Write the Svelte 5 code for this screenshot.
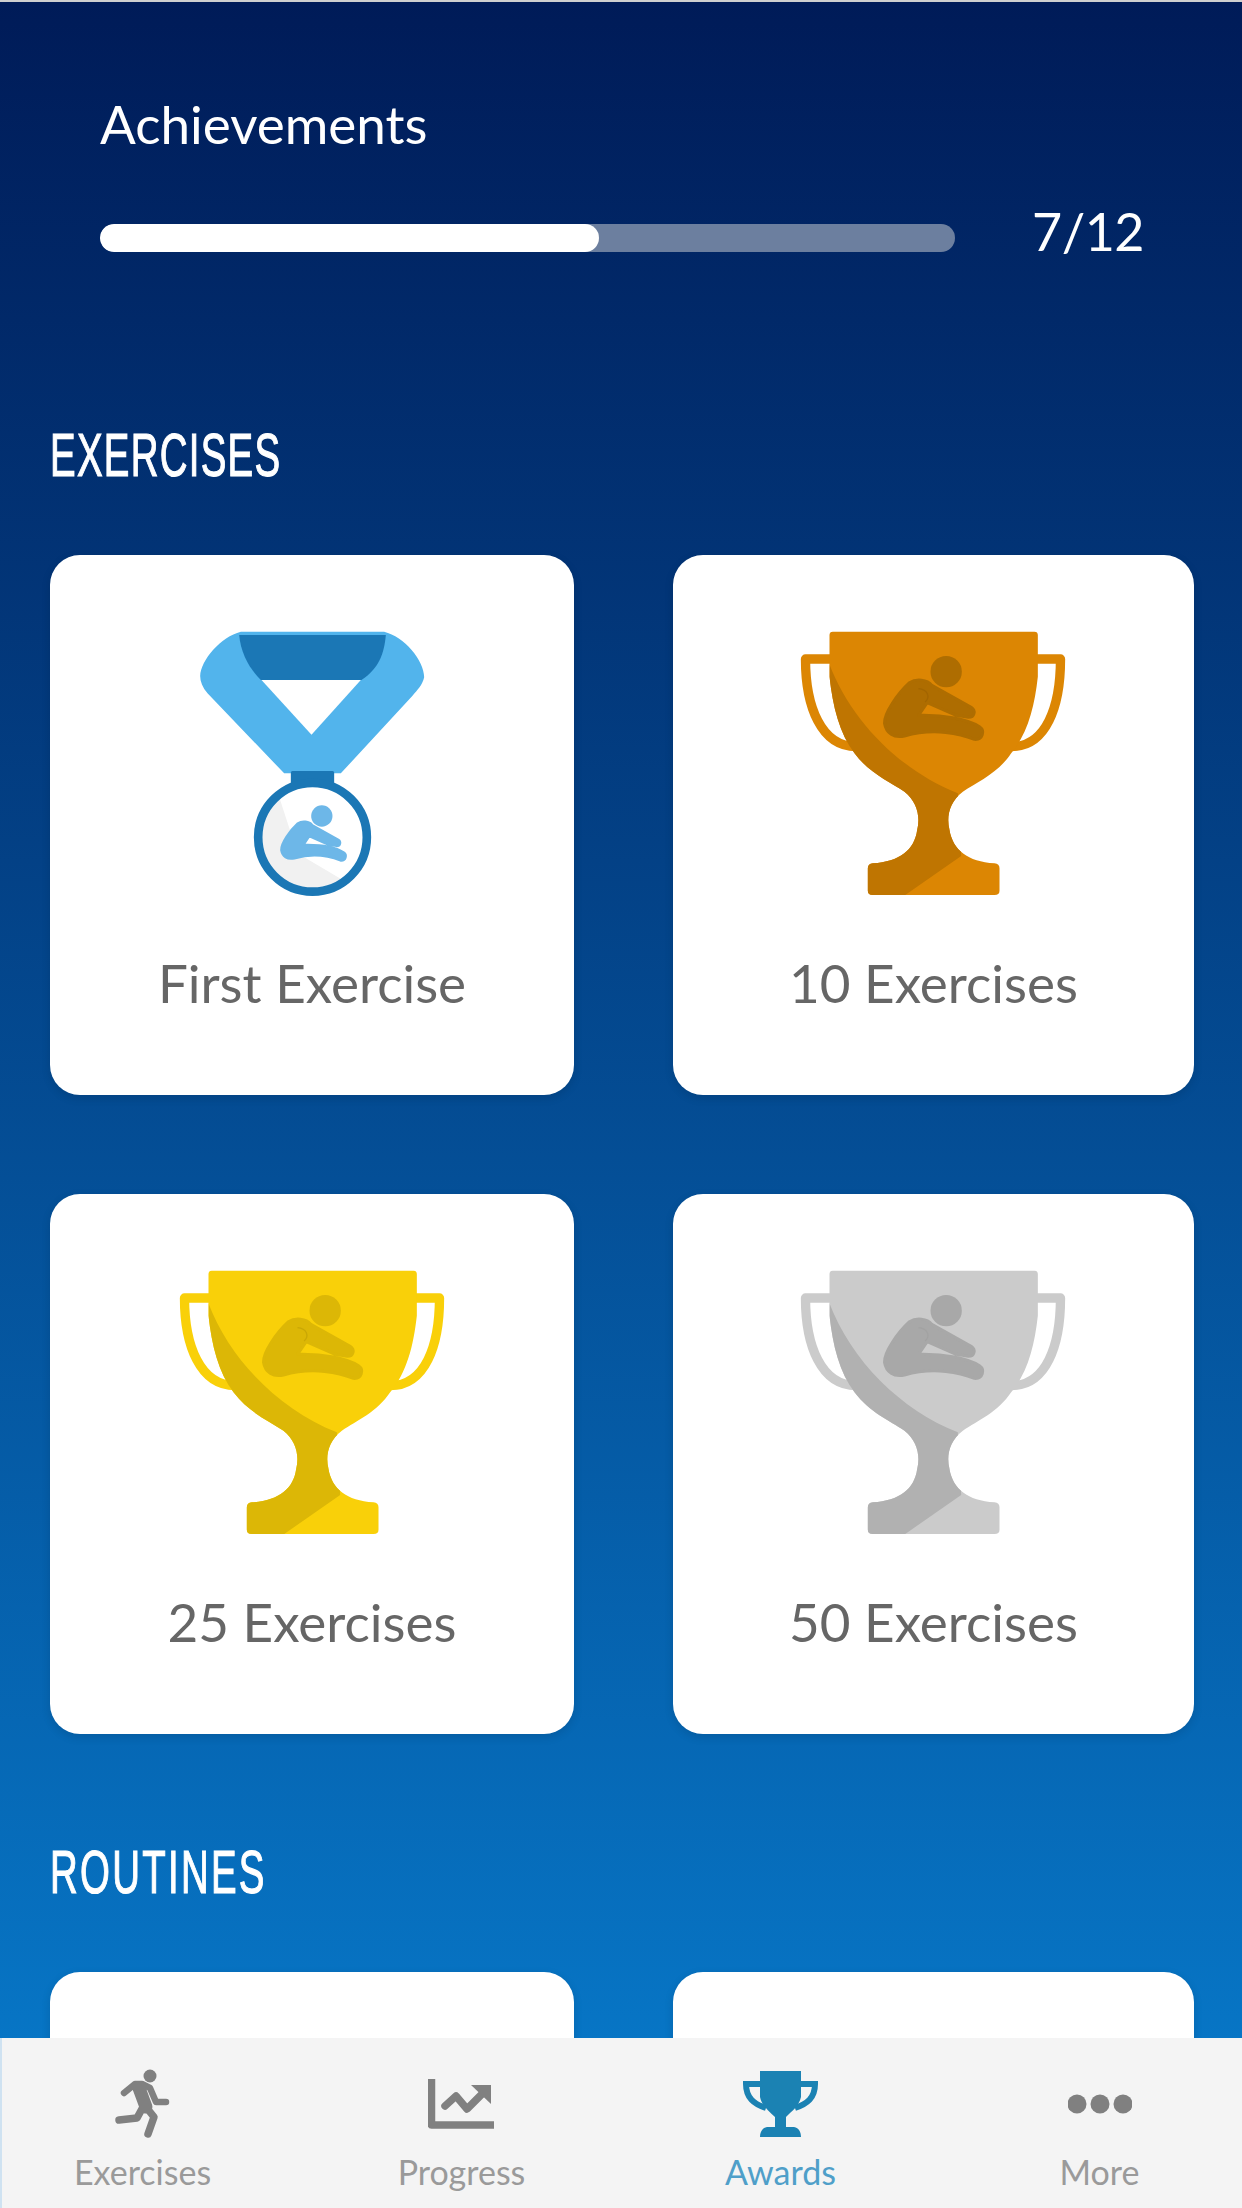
<script lang="ts">
	const exercises = [
		{ label: 'First Exercise', kind: 'medal' },
		{ label: '10 Exercises', kind: 'bronze' },
		{ label: '25 Exercises', kind: 'gold' },
		{ label: '50 Exercises', kind: 'silver' }
	];
	const tabs = ['Exercises', 'Progress', 'Awards', 'More'];
	const cup =
		'M175,75 Q175,65 185,65 L790,65 Q800,65 800,75 L800,200 C790,290 770,370 720,430 C680,490 620,515 575,545 C535,575 525,620 535,660 C545,720 590,755 670,760 Q685,762 685,775 L685,842 Q685,855 670,855 L305,855 Q290,855 290,842 L290,775 Q290,762 305,760 C385,755 430,720 438,660 C448,620 438,575 400,545 C355,515 295,490 250,430 C205,370 185,290 175,200 Z';
	const figure =
		'M340,340 C338,310 380,250 415,218 C435,205 468,208 482,226 L600,292 C615,302 610,322 592,322 L555,316 L468,278 L442,316 C520,314 590,328 625,350 C642,362 635,390 610,388 C570,372 490,352 400,378 C368,385 345,370 340,340 Z';
</script>

{#snippet trophy(kind)}
	<svg class="art {kind}" viewBox="0 -30 974 960">
		<defs>
			<clipPath id="cup-{kind}"><path d={cup} /></clipPath>
		</defs>
		<path class="handle" d="M180,147 H103 C103,290 150,410 255,410" />
		<path class="handle" d="M795,147 H868 C868,290 825,410 720,410" />
		<path class="main" d={cup} />
		<path
			class="dark"
			clip-path="url(#cup-{kind})"
			d="M170,150 C235,330 385,480 560,550 L570,738 L395,860 L100,860 L100,150 Z"
		/>
		<circle class="head-dot" cx="525" cy="185" r="47" />
		<path class="fig" d={figure} />
		<path class="crease" d="M442,236 C470,238 478,262 462,276" />
	</svg>
{/snippet}

{#snippet medal()}
	<svg class="art" viewBox="-2 0 974 960">
		<defs>
			<clipPath id="disc-clip"><circle cx="485" cy="712" r="155" /></clipPath>
		</defs>
		<path
			class="ribbon"
			d="M270,95 H700 C760,110 820,180 820,232 C815,255 800,270 785,287 L570,520 H400 L170,280 C155,262 148,245 148,228 C150,180 210,110 270,95 Z"
		/>
		<path class="band" d="M265,105 H705 C700,160 685,205 632,240 H330 C295,205 270,160 265,105 Z" />
		<path class="gap" d="M332,240 H630 L482,404 Z" />
		<rect class="band" x="420" y="513" width="130" height="44" rx="5" />
		<circle class="disc" cx="485" cy="712" r="152" />
		<path
			class="disc-shade"
			clip-path="url(#disc-clip)"
			d="M375,560 L440,760 L610,860 L480,900 L300,820 L300,600 Z"
		/>
		<circle class="ring" cx="485" cy="712" r="163" />
		<circle class="sky" cx="513" cy="648" r="32" />
		<path class="sky thick" transform="translate(166.5 525.9) scale(0.66)" d={figure} />
	</svg>
{/snippet}

<div class="page">
	<main class="content">
		<header class="head">
			<h1>Achievements</h1>
			<div class="progress-row">
				<div class="track"><div class="fill" style="width: {(7 / 12) * 100}%"></div></div>
				<span class="count">7/12</span>
			</div>
		</header>

		<h2>EXERCISES</h2>
		<div class="cards">
			{#each exercises as item}
				<div class="card">
					{#if item.kind === 'medal'}
						{@render medal()}
					{:else}
						{@render trophy(item.kind)}
					{/if}
					<span class="label">{item.label}</span>
				</div>
			{/each}
		</div>

		<h2 class="routines">ROUTINES</h2>
		<div class="cards">
			<div class="card"></div>
			<div class="card"></div>
		</div>
	</main>

	<nav class="tabbar">
		<span class="edge"></span>
		{#each tabs as tab}
			<div class="tab" class:active={tab === 'Awards'}>
				<div class="tab-icon">
					{#if tab === 'Exercises'}
						<svg class="run" width="60" height="70" viewBox="0 0 60 70">
							<circle cx="37" cy="7" r="6.5" />
							<path class="s12" d="M26,19 L33,38" />
							<path class="s6" d="M11,24 L22,15 H29 L37,19 L43,33 H53" />
							<path class="s7" d="M33,38 L41,48 L35,65" />
							<path class="s7" d="M30,38 L24,49 L6,51" />
						</svg>
					{:else if tab === 'Progress'}
						<svg class="run" width="67" height="50" viewBox="0 0 67 50">
							<path class="s7 sq" d="M3.5,0 V46 H66" />
							<path class="s7" d="M17,27 L28,17 L39,30 L54,15" />
							<path class="tip" d="M43,6 H63 V25 Z" />
						</svg>
					{:else if tab === 'Awards'}
						<svg width="78" height="68" viewBox="0 0 78 68">
							<path class="cup-line" d="M18,14 H4 C4,28 12,34 24,38" />
							<path class="cup-line" d="M59,14 H73 C73,28 65,34 53,38" />
							<path
								class="cup-fill"
								d="M18,1 H59 V27 C57,36 50,41 44,47 V57 H52 C57,58 59,62 59,67 H18 C18,62 20,58 25,57 H33 V47 C27,41 20,36 18,27 Z"
							/>
						</svg>
					{:else}
						<svg class="run" width="64" height="20" viewBox="0 0 64 20">
							<circle cx="9" cy="10" r="9.5" />
							<circle cx="32" cy="10" r="9.5" />
							<circle cx="55" cy="10" r="9.5" />
						</svg>
					{/if}
				</div>
				<span class="tab-label">{tab}</span>
			</div>
		{/each}
	</nav>
</div>

<style>
	:global(body) { margin: 0; background: #fff; }
	.page {
		width: 1242px; height: 2208px; display: flex; flex-direction: column;
		overflow: hidden; font-family: Lato, "Noto Sans", sans-serif;
		border-top: 2px solid #cfcfcf; box-sizing: border-box;
	}
	.content {
		flex: 1; min-height: 0; overflow: hidden; padding: 0 48px 0 50px;
		background: linear-gradient(180deg, #001b58 0%, #0775c5 100%);
	}
	.head { padding: 90px 50px 0; color: #fff; }
	h1 { margin: 0; font-size: 53px; line-height: 64px; font-weight: 400; }
	.progress-row { display: flex; align-items: center; gap: 77px; margin-top: 68px; }
	.track { width: 856px; height: 28px; border-radius: 14px; background: #6c7f9f; overflow: hidden; }
	.fill { height: 100%; background: #fff; border-radius: 14px; }
	.count { font-size: 52px; line-height: 40px; margin-top: -14px; letter-spacing: -0.5px; }
	h2 {
		margin: 168px 0 0; color: #fff; font-family: "Liberation Sans", sans-serif;
		font-size: 61px; line-height: 70px; font-weight: 400; letter-spacing: 2px;
		-webkit-text-stroke: 1.2px #fff;
		transform: scaleX(0.63); transform-origin: left center; white-space: nowrap;
	}
	h2.routines { margin-top: 103px; letter-spacing: 3.6px; }
	.cards {
		display: grid; grid-template-columns: 524px 521px; gap: 99px; margin-top: 65px;
	}
	.card {
		height: 540px; background: #fff; border-radius: 30px; display: flex; flex-direction: column;
		align-items: center; box-shadow: 0 3px 10px rgba(0, 0, 0, 0.12);
	}
	.art { width: 325px; height: 320px; margin-top: 45px; flex: none; }
	.label { margin-top: 33px; font-size: 53px; line-height: 60px; color: #666; }

	.bronze { --main: #dc8603; --dark: #bf7501; --fig: #ae6d01; --edge: #a26501; }
	.gold { --main: #f9d009; --dark: #dcb706; --fig: #dcb706; --edge: #c9a705; }
	.silver { --main: #cbcbcb; --dark: #b1b1b1; --fig: #a8a8a8; --edge: #a2a2a2; }
	.main { fill: var(--main); }
	.dark { fill: var(--dark); }
	.head-dot { fill: var(--fig); }
	.fig { fill: var(--fig); stroke: var(--fig); stroke-width: 9; stroke-linejoin: round; }
	.crease { fill: none; stroke: var(--edge); stroke-width: 4; }
	.handle { fill: none; stroke: var(--main); stroke-width: 28; stroke-linejoin: round; }

	.ribbon { fill: #52b4ec; }
	.band { fill: #1b77b5; }
	.gap { fill: #fff; }
	.disc { fill: #fff; }
	.disc-shade { fill: #f1f1f1; }
	.ring { fill: none; stroke: #1b77b5; stroke-width: 26; }
	.sky { fill: #6db7e8; }
	.thick { stroke: #6db7e8; stroke-width: 9; stroke-linejoin: round; }

	.tabbar {
		flex: none; height: 170px; background: #f4f4f4; display: grid;
		grid-template-columns: repeat(4, 1fr); margin: 0 -17px; position: relative;
	}
	.edge { position: absolute; left: 17px; top: 0; bottom: 0; width: 2px; background: #cfe2f1; }
	.tab { display: flex; flex-direction: column; align-items: center; padding-top: 30px; }
	.tab-icon { height: 72px; display: flex; align-items: center; justify-content: center; }
	.tab-label { margin-top: 12px; font-size: 34px; line-height: 40px; color: #9a9a9a; }
	.active .tab-label { color: #4f9fc9; }
	.run { fill: #808080; }
	.s12, .s7, .s6 { fill: none; stroke: #808080; stroke-linecap: round; stroke-linejoin: round; }
	.s12 { stroke-width: 13; }
	.s7 { stroke-width: 7.5; }
	.s6 { stroke-width: 6.5; }
	.sq { stroke-linecap: butt; }
	.tip { fill: #808080; }
	.cup-line { fill: none; stroke: #1b82b3; stroke-width: 6; }
	.cup-fill { fill: #1b82b3; }
</style>
